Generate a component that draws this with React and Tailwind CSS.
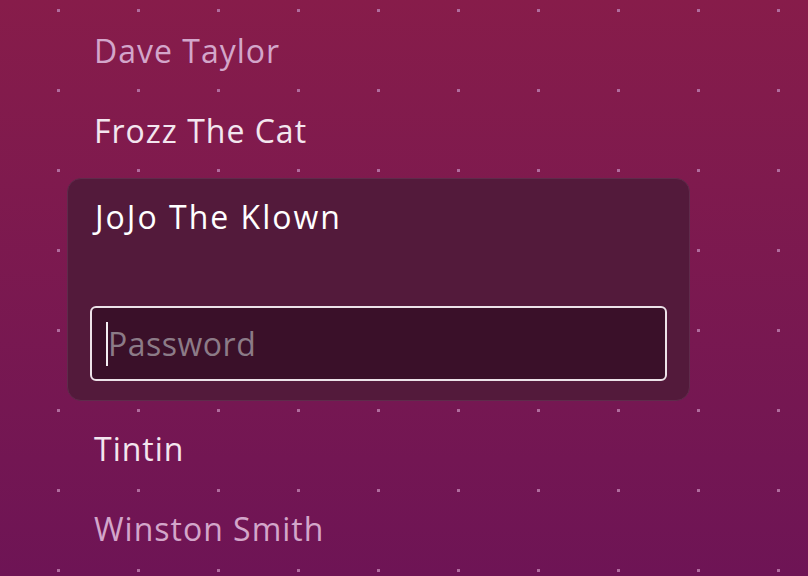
const font = { fontFamily: '"Open Sans", "Noto Sans", sans-serif' };

function Dots() {
  return (
    <svg className="absolute inset-0 h-full w-full" aria-hidden="true">
      <defs>
        <pattern id="dots" x="0" y="0" width="80" height="80" patternUnits="userSpaceOnUse">
          <rect x="57" y="9" width="3" height="3" fill="#b06c9e" />
        </pattern>
      </defs>
      <rect width="100%" height="100%" fill="url(#dots)" />
    </svg>
  );
}

function Name({ children, tone }) {
  return (
    <div className={`h-[80px] pl-[27px] text-[32px] leading-[80px] tracking-[1px] ${tone}`}>{children}</div>
  );
}

export default function App() {
  return (
    <div className="relative h-[576px] w-[808px] overflow-hidden bg-gradient-to-b from-[#871c4a] to-[#6e1455]" style={font}>
      <Dots />
      <div className="relative flex flex-col pl-[67px] pt-[11px]">
        <Name tone="text-[#d3a6ca]">Dave Taylor</Name>
        <Name tone="text-[#f3e6ef]">Frozz The Cat</Name>

        <div className="mb-2 mt-[7px] flex h-[223px] w-[623px] shrink-0 flex-col rounded-[14px] border border-[#5f2b4b] bg-[#531a3b] px-[22px]">
          <div className="h-[76px] shrink-0 pl-[5px] text-[32px] leading-[76px] tracking-[2px] text-white">JoJo The Klown</div>
          <div className="mt-[51px] flex h-[75px] shrink-0 items-center rounded-[6px] border-2 border-[#ece2e8] bg-[#3a1029] pl-[14px]">
            <span className="h-[44px] w-[2px] bg-[#f4eef2]" />
            <span className="text-[32px] tracking-[0.5px] text-[#8c7b87]">Password</span>
          </div>
        </div>

        <Name tone="text-[#f3e6ef]">Tintin</Name>
        <Name tone="text-[#d3a6ca]">Winston Smith</Name>
      </div>
    </div>
  );
}
